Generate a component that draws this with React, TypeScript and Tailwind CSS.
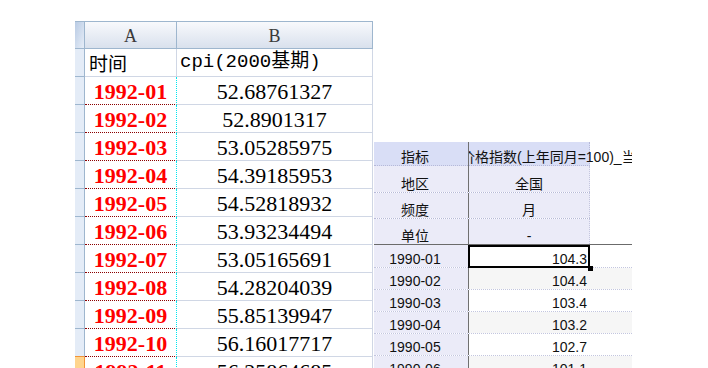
import React from 'react';

const excelRows: [string, string][] = [
  ['1992-01', '52.68761327'],
  ['1992-02', '52.8901317'],
  ['1992-03', '53.05285975'],
  ['1992-04', '54.39185953'],
  ['1992-05', '54.52818932'],
  ['1992-06', '53.93234494'],
  ['1992-07', '53.05165691'],
  ['1992-08', '54.28204039'],
  ['1992-09', '55.85139947'],
  ['1992-10', '56.16017717'],
  ['1992-11', '56.25864685'],
];

const dataRows: [string, string][] = [
  ['1990-01', '104.3'],
  ['1990-02', '104.4'],
  ['1990-03', '103.4'],
  ['1990-04', '103.2'],
  ['1990-05', '102.7'],
  ['1990-06', '101.1'],
];

function ExcelSheet() {
  return (
    <div className="ml-[75px] mt-[21px] flex flex-col w-[298px] shrink-0">
      {/* column headers */}
      <div className="flex h-[28px] border-t border-b border-[#9eb6ce] bg-linear-to-b from-[#f8f9fc] to-[#d9e1ed]">
        <div className="w-[10px] border-r border-[#9eb6ce] bg-linear-to-br from-[#b9cbe4] to-[#e6edf7]" />
        <div className="w-[92px] border-r border-[#9eb6ce] flex items-center justify-center pt-[3px] text-[18px] text-[#3a3a3a] font-['Liberation_Serif',serif]">A</div>
        <div className="w-[196px] border-r border-[#9eb6ce] flex items-center justify-center pt-[3px] text-[18px] text-[#3a3a3a] font-['Liberation_Serif',serif]">B</div>
      </div>
      {/* title row */}
      <div className="flex h-[28px]">
        <div className="w-[10px] bg-[#e4ecf7] border-r border-b border-[#9eb6ce]" />
        <div className="w-[92px] border-r border-b border-[#d0d7e5] flex items-center pl-[4px] text-[19px] leading-none text-black font-['Noto_Sans_CJK_SC',sans-serif]">时间</div>
        <div className="w-[196px] border-r border-b border-[#d0d7e5] flex items-center pl-[3px] text-[19px] leading-none text-black whitespace-nowrap font-['Liberation_Mono','Noto_Sans_CJK_SC',monospace]">cpi(2000基期)</div>
      </div>
      {excelRows.map(([date, value], i) => (
        <div key={date} className="flex h-[28px] shrink-0">
          <div
            className={
              i === excelRows.length - 2
                ? 'w-[10px] bg-[#e4ecf7] border-r border-b border-r-[#9eb6ce] border-b-[#f29436]'
                : i === excelRows.length - 1
                  ? 'w-[10px] bg-[#ffd58e] border-r border-b border-[#f29436]'
                  : 'w-[10px] bg-[#e4ecf7] border-r border-b border-[#9eb6ce]'
            }
          />
          <div className="w-[92px] border-r border-b border-dotted border-r-[#00e6ee] border-b-[#8b0000] flex items-center justify-center pt-[2px] text-[22px] leading-none font-bold text-[#ff0000] font-['Liberation_Serif',serif]">
            {date}
          </div>
          <div className="w-[196px] border-r border-b border-[#d0d7e5] flex items-center justify-center pt-[2px] text-[22px] leading-none text-black font-['Liberation_Serif',serif]">
            {value}
          </div>
        </div>
      ))}
    </div>
  );
}

function HeadRow({ label, value, h, last }: { label: string; value: string; h: string; last?: boolean }) {
  return (
    <div className={last ? `flex ${h} border-b border-[#6b6b6b]` : `flex ${h}`}>
      <div className={last ? 'flex w-[216px]' : 'flex w-[216px] border-b border-dotted border-[#b6b9d8]'}>
        <div className="w-[95px] bg-[#ebebf8] border-r border-solid border-[#707070] pr-3 flex items-end justify-center leading-[16px]">
          {label}
        </div>
        <div className="w-[121px] bg-[#ebebf8] border-r border-dotted border-[#c4c6de] flex items-end justify-center leading-[16px]">
          {value}
        </div>
      </div>
    </div>
  );
}

function DataSheet() {
  return (
    <div className="ml-[1px] mt-[142px] w-[258px] shrink-0 flex flex-col overflow-hidden text-[14px] text-[#111] font-['Liberation_Sans','Noto_Sans_CJK_SC',sans-serif]">
      <div className="flex h-[24px]">
        <div className="flex w-[95px] shrink-0 bg-[#d9def6] border-r border-solid border-[#707070]">
          <div className="flex-1 border-b border-dotted border-[#b6b9d8] pr-3 flex items-end justify-center leading-[16px]">指标</div>
        </div>
        <div className="relative flex-1 overflow-hidden">
          <div className="w-[121px] h-full bg-[#d9def6] border-r border-b border-dotted border-[#b6b9d8]" />
          <span className="absolute left-[-8px] bottom-[1px] leading-[16px] whitespace-nowrap">价格指数(上年同月=100)_当月</span>
        </div>
      </div>
      <HeadRow label="地区" value="全国" h="h-[27px]" />
      <HeadRow label="频度" value="月" h="h-[26px]" />
      <HeadRow label="单位" value="-" h="h-[26px]" last />
      {dataRows.map(([date, value], i) => (
        <div
          key={date}
          className={i === 0 ? 'relative z-10 flex h-[23px] border-b border-dotted border-[#c3c6df]' : 'flex h-[22px] shrink-0 border-b border-dotted border-[#c3c6df]'}
        >
          <div className="w-[95px] bg-[#ebebf8] border-r border-solid border-[#707070] pr-3 flex items-end justify-center leading-[16px]">
            {date}
          </div>
          <div className={i % 2 === 1 ? 'relative w-[121px] bg-[#f6f6f6] flex items-end justify-end pr-[3px] leading-[16px]' : 'relative w-[121px] bg-white flex items-end justify-end pr-[3px] leading-[16px]'}>
            {value}
            {i === 0 && (
              <>
                <div className="absolute left-[-1px] right-0 top-0 bottom-[-1px] border-2 border-black" />
                <div className="absolute right-[-3px] bottom-[-4px] w-[5px] h-[5px] bg-black" />
              </>
            )}
          </div>
          <div className={i % 2 === 1 ? 'flex-1 bg-[#f6f6f6]' : 'flex-1 bg-white'} />
        </div>
      ))}
    </div>
  );
}

export default function App() {
  return (
    <div className="w-[708px] h-[368px] overflow-hidden bg-white flex items-start">
      <ExcelSheet />
      <DataSheet />
    </div>
  );
}
